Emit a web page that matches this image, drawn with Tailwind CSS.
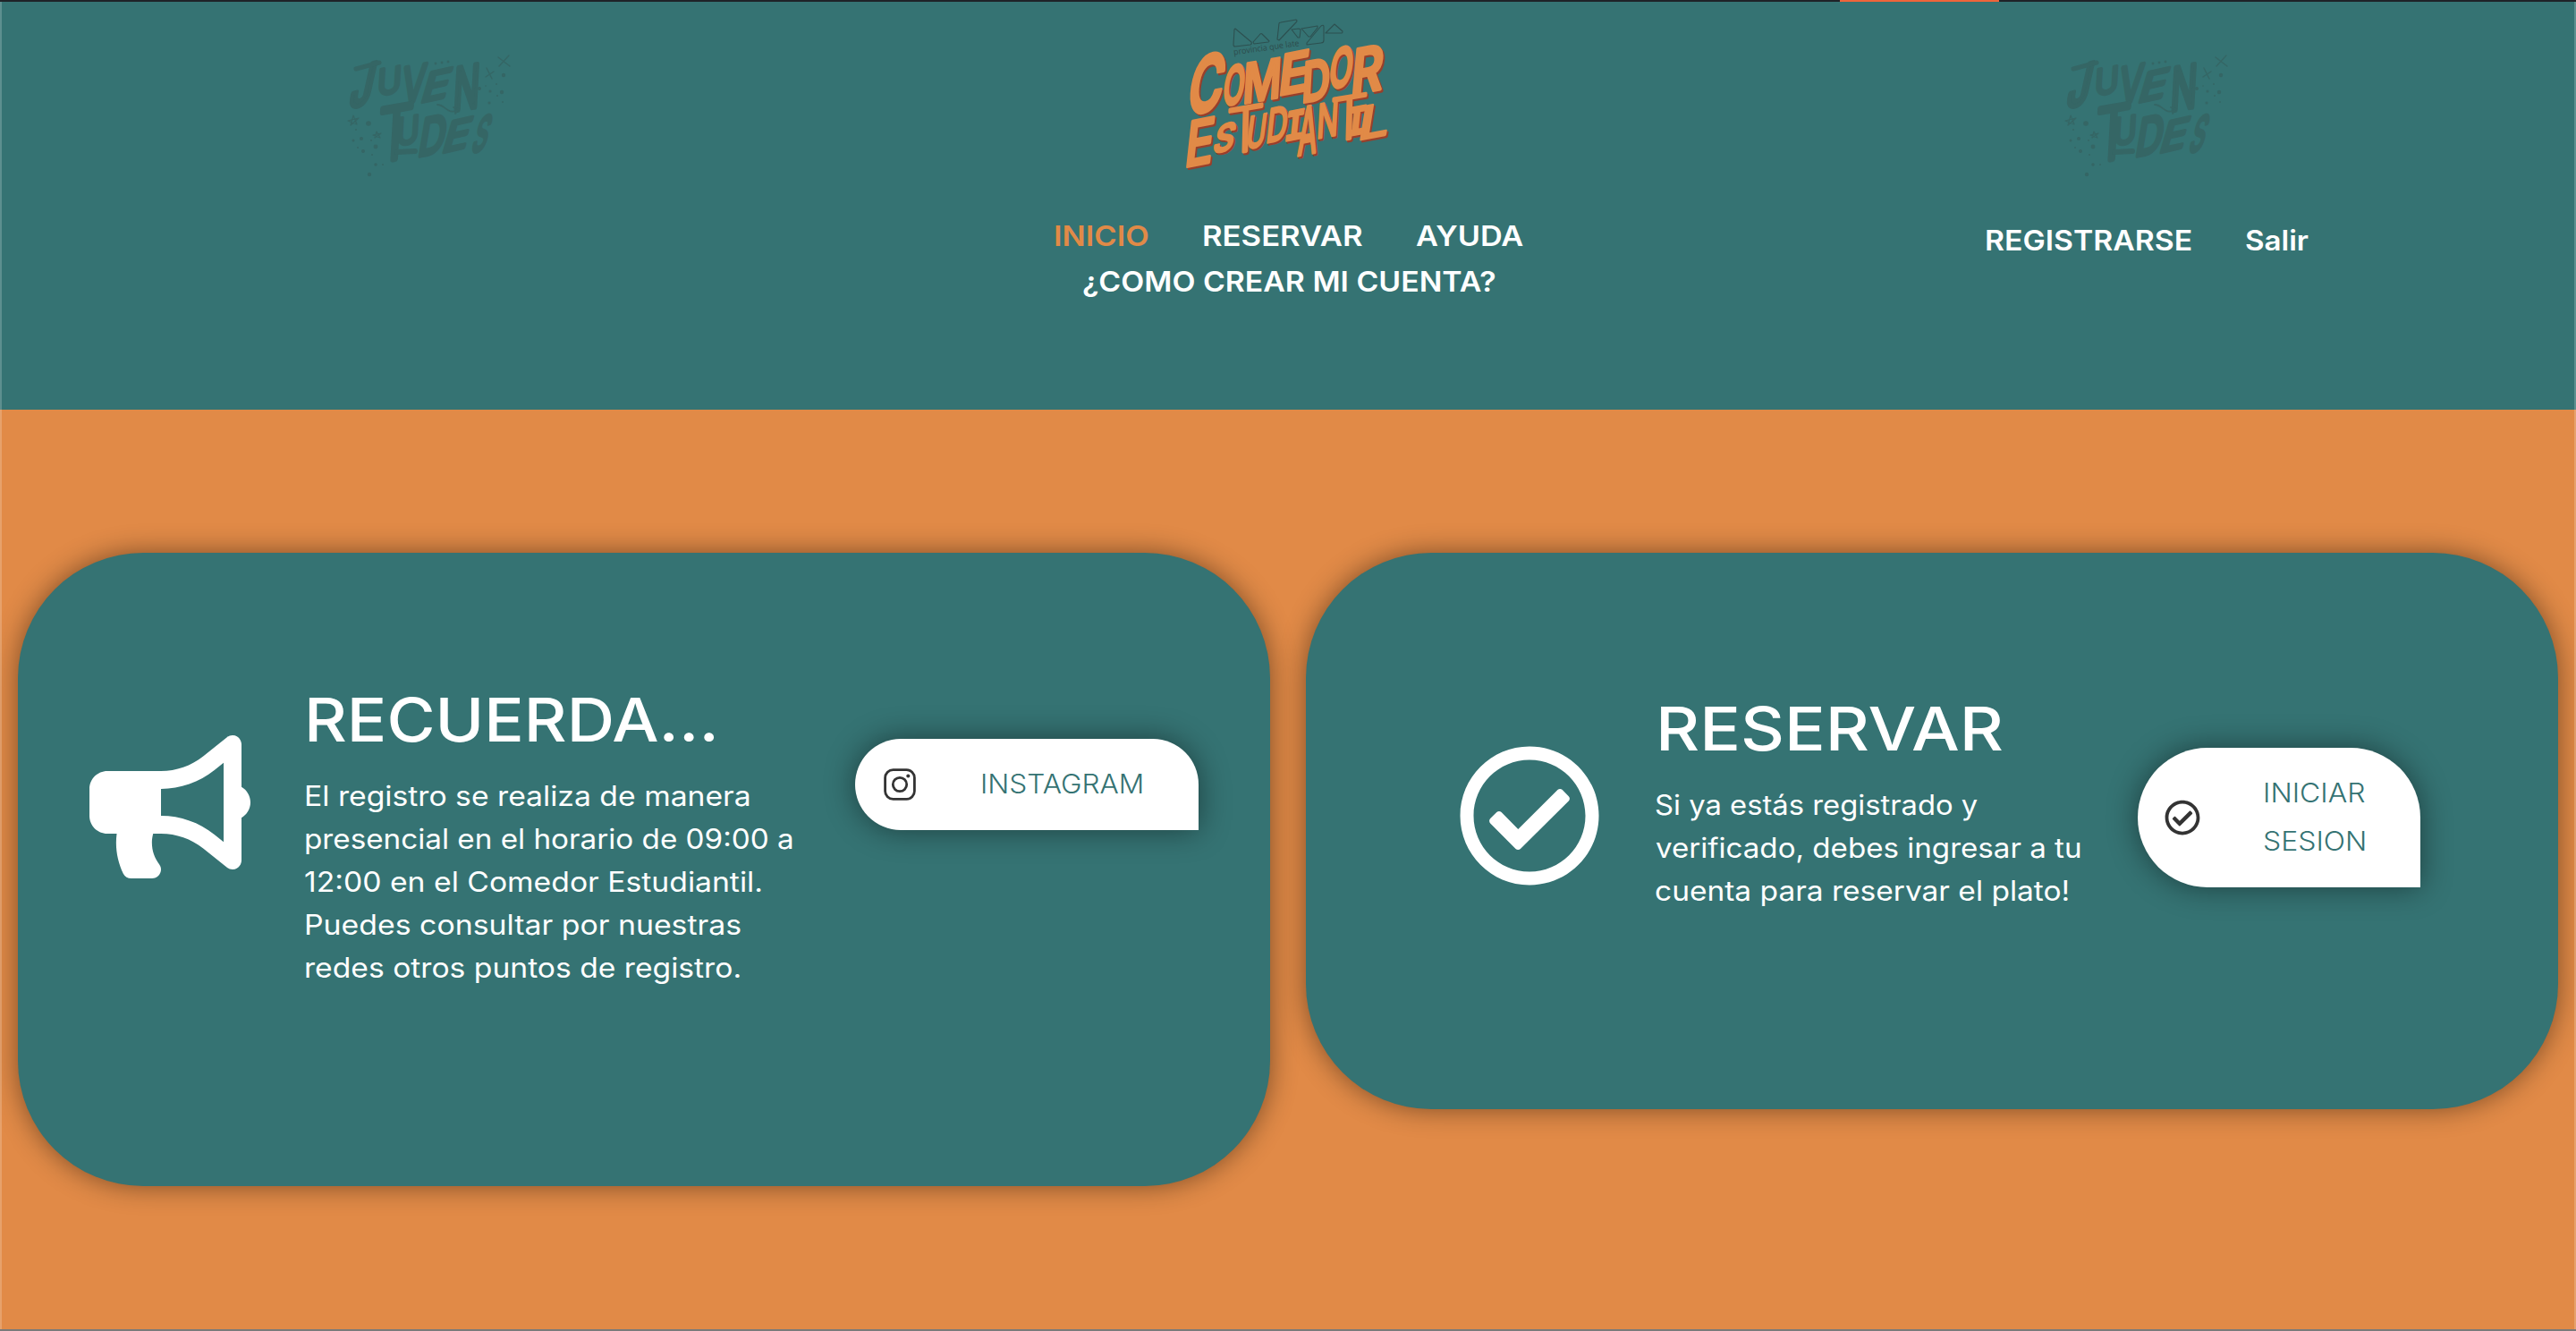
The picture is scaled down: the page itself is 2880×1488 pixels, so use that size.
<!DOCTYPE html>
<html lang="es">
<head>
<meta charset="utf-8">
<title>Comedor Estudiantil</title>
<script src="https://cdn.jsdelivr.net/npm/@tailwindcss/browser@4"></script>
</head>
<body class="relative flex h-[1488px] w-[2880px] flex-col overflow-hidden bg-[#e18a47] font-['Inter',sans-serif] text-white">
  <svg class="absolute size-0">
    <defs>
      <symbol id="check" viewBox="0 0 512 512"><path d="M256 8C119.033 8 8 119.033 8 256s111.033 248 248 248 248-111.033 248-248S392.967 8 256 8zm0 48c110.532 0 200 89.451 200 200 0 110.532-89.451 200-200 200-110.532 0-200-89.451-200-200 0-110.532 89.451-200 200-200m140.204 130.267l-22.536-22.718c-4.667-4.705-12.265-4.736-16.97-.068L215.346 303.697l-59.792-60.277c-4.667-4.705-12.265-4.736-16.97-.069l-22.719 22.536c-4.705 4.667-4.736 12.265-.068 16.971l90.781 91.516c4.667 4.705 12.265 4.736 16.97.068l172.589-171.204c4.704-4.668 4.734-12.266.067-16.971z"/></symbol>
      <g id="juventudes" fill="#356665" stroke="#356665" stroke-linecap="round" stroke-linejoin="round">
        <g data-word="juventudes" stroke-width="9"></g>
        <g fill="none" stroke-width="5"><path d="M74 120l20-1" stroke-width="6"/><path d="M28 27l26-7"/></g>
        <g fill="none" stroke-width="1.8">
          <path d="M119 67c9 0 11 12 23 6m-5-3l6 2-4 5"/>
          <path d="M187 14l13 10m-1-12l-11 12M174 26l6 12m2-8l-9 6" stroke-width="1.4"/>
          <path d="M19 85l12-3-9 8 3-11 4 10zM47 101l9-2-7 5 2-7 4 7z" stroke-width="1.2"/>
        </g>
        <g stroke="none">
          <circle cx="117" cy="21" r="1.4"/><circle cx="124" cy="20" r="1.4"/><circle cx="131" cy="19" r="1.4"/>
          <circle cx="193" cy="34" r="2.2"/><circle cx="166" cy="49" r="2"/><circle cx="178" cy="52" r="1.6"/><circle cx="191" cy="53" r="2.2"/><circle cx="177" cy="65" r="1.6"/><circle cx="185" cy="44" r="1"/><circle cx="186" cy="57" r="1"/><circle cx="192" cy="64" r="1"/><circle cx="173" cy="46" r=".8"/>
          <circle cx="42" cy="88" r="2.8"/><circle cx="34" cy="105" r="2"/><circle cx="25" cy="107" r="1.5"/><circle cx="50" cy="114" r="2.4"/><circle cx="36" cy="119" r="2"/><circle cx="45" cy="107" r="1"/><circle cx="30" cy="115" r="1"/><circle cx="28" cy="95" r="1"/><circle cx="50" cy="134" r="1.8"/><circle cx="43" cy="145" r="2.2"/><circle cx="58" cy="134" r="1"/><circle cx="46" cy="123" r="1"/>
        </g>
      </g>
    </defs>
  </svg>

  <div class="flex h-0.5 w-full bg-[#1f2328]"><div class="ml-[2057px] w-[178px] bg-[#f0643a]"></div></div>

  <header class="grid h-[456px] grid-cols-3 bg-[#357373] text-[31px] font-[570]">
    <div class="flex justify-center pt-12">
      <svg class="h-[150px] w-[220px]" viewBox="0 0 220 150"><use href="#juventudes"/></svg>
    </div>
    <div class="flex flex-col items-center">
      <svg class="h-52 w-[280px]" viewBox="0 2 280 208">
        <g fill="none" stroke="#2d5050" stroke-width="1.1" stroke-linejoin="round">
          <path d="M81 32l18 15q1 2-1 3l-17 2q-2 0-2-2l1-17zM101 47l8-9q1-1 2 0l8 8-1 1-16 2zM130 26q0-1 2-1l17-3q2 1 0 3l-19 20-2-1zM144 33l8-1q2 0 2 2l-1 8-2 0zM155 32l18-3v2l-8 10-2 0zM161 48l16-19q3-2 3 1v15q0 3-3 3l-16 2zM182 37l10-10 9 8q0 2-1 2z"/>
        </g>
        <text class="font-['Open_Sans',sans-serif]" transform="translate(79.500 61.500) rotate(-8)" textLength="74" lengthAdjust="spacingAndGlyphs" font-size="9.500" font-weight="500" fill="#2d4d4d">provincia que late</text>
        <g data-word="comedor" transform="translate(1.700 2)" fill="#983f2b" stroke="#983f2b" stroke-width="5" stroke-linejoin="round"></g>
        <g data-word="comedor" fill="#e18a47" stroke="#e18a47" stroke-width="5" stroke-linejoin="round"></g>
      </svg>
      <nav class="mt-7 flex flex-col items-start leading-[51px] whitespace-nowrap">
        <div class="flex">
          <a class="w-[166.5px] origin-left scale-x-[1.112] text-[#e18a47]">INICIO</a>
          <a class="w-[238.5px] origin-left scale-x-[1.118]">RESERVAR</a>
          <a class="w-[120px] origin-left scale-x-[1.105]">AYUDA</a>
        </div>
        <a class="ml-8 origin-left scale-x-[1.09]">¿COMO CREAR MI CUENTA?</a>
      </nav>
    </div>
    <div class="flex flex-col items-center pt-12">
      <svg class="h-[150px] w-[220px]" viewBox="0 0 220 150"><use href="#juventudes"/></svg>
      <nav class="mt-[45px] flex leading-[48px]">
        <a class="w-[291px] origin-left scale-x-[1.088]">REGISTRARSE</a>
        <a class="w-[71px] origin-left scale-x-[1.068]">Salir</a>
      </nav>
    </div>
  </header>

  <main class="grid grid-cols-2 items-start gap-10 px-5 pt-40">
    <section class="flex h-[708px] items-start rounded-[140px] bg-[#357373] pl-20 shadow-[0_0_30px_rgba(0,0,0,0.45)]">
      <svg class="mt-[204px] h-40 w-[180px] shrink-0" viewBox="0 0 576 512" fill="currentColor"><path d="M576 240c0-23.63-12.95-44.04-32-55.12V32.01C544 23.26 537.02 0 512 0c-7.12 0-14.19 2.38-19.98 7.02l-85.03 68.03C364.28 109.19 310.66 128 256 128H64c-35.35 0-64 28.65-64 64v96c0 35.35 28.65 64 64 64h33.7c-1.39 10.48-2.18 21.14-2.18 32 0 39.77 9.26 77.35 25.56 110.94 5.19 10.69 16.52 17.06 28.4 17.06h74.28c26.05 0 41.69-29.84 25.9-50.56-16.4-21.52-26.15-48.36-26.15-77.44 0-11.11 1.62-21.79 4.41-32H256c54.66 0 108.28 18.81 150.98 52.95l85.03 68.03a32.023 32.023 0 0 0 19.98 7.02c24.92 0 32-22.78 32-32V295.13C563.05 284.04 576 263.63 576 240zm-96 141.42l-33.05-26.44C392.95 311.78 325.12 288 256 288v-96c69.12 0 136.95-23.78 190.95-66.98L480 98.58v282.84z"/></svg>
      <div class="mt-[145px] ml-[60px] w-[556px] shrink-0 whitespace-nowrap">
        <h2 class="origin-left scale-x-[1.096] text-[67.4px] leading-[84px] font-[450]">RECUERDA...</h2>
        <p class="mt-[19px] flex flex-col items-start text-[31px] leading-[48px]">
          <span class="origin-left scale-x-[1.087]">El registro se realiza de manera</span>
          <span class="origin-left scale-x-[1.072]">presencial en el horario de 09:00 a</span>
          <span class="origin-left scale-x-[1.087]">12:00 en el Comedor Estudiantil.</span>
          <span class="origin-left scale-x-[1.091]">Puedes consultar por nuestras</span>
          <span class="origin-left scale-x-[1.085]">redes otros puntos de registro.</span>
        </p>
      </div>
      <a class="mt-52 ml-[60px] flex h-[102px] w-96 items-center rounded-[51px] rounded-br-none bg-white pl-8 text-[#357373] shadow-[0_0_34px_rgba(0,0,0,0.45)]">
        <svg class="size-9" viewBox="0 0 36 36" fill="none" stroke="#333" stroke-width="2.800"><rect x="1.600" y="1.600" width="32.800" height="32.800" rx="9"/><circle cx="18" cy="18" r="7.700"/><circle cx="27.300" cy="8.500" r="2" fill="#333" stroke="none"/></svg>
        <span class="ml-[72px] origin-left scale-x-[1.083] text-[29.2px] font-[360]">INSTAGRAM</span>
      </a>
    </section>

    <section class="flex h-[622px] items-start rounded-[140px] bg-[#357373] pl-[170px] shadow-[0_0_30px_rgba(0,0,0,0.45)]">
      <svg class="mt-[214px] size-40 shrink-0" fill="currentColor"><use href="#check"/></svg>
      <div class="mt-[155px] ml-[60px] w-[480px] shrink-0 whitespace-nowrap">
        <h2 class="ml-px origin-left scale-x-[1.126] text-[67.4px] leading-[84px] font-[450]">RESERVAR</h2>
        <p class="mt-[19px] flex flex-col items-start text-[31px] leading-[48px]">
          <span class="origin-left scale-x-[1.057]">Si ya estás registrado y</span>
          <span class="ml-px origin-left scale-x-[1.068]">verificado, debes ingresar a tu</span>
          <span class="origin-left scale-x-[1.08]">cuenta para reservar el plato!</span>
        </p>
      </div>
      <a class="mt-[218px] ml-[60px] flex h-[156px] w-[316px] items-center rounded-[78px] rounded-br-none bg-white pl-[30px] text-[#357373] shadow-[0_0_34px_rgba(0,0,0,0.45)]">
        <svg class="size-10" fill="#333"><use href="#check"/></svg>
        <span class="ml-[70px] flex origin-left scale-x-[1.095] flex-col text-[29.2px] leading-[54px] font-[360]"><span>INICIAR</span><span>SESION</span></span>
      </a>
    </section>
  </main>

  <div class="absolute inset-x-0 top-0.5 bottom-0 border-x-2 border-white/20"></div>
  <div class="absolute inset-x-0 bottom-0 h-0.5 bg-[#7a7a7a]"></div>

  <script>
    // Hand-lettered wordmarks: [letter, left, top, right, bottom, slant, weight]
    const words = {
      comedor: [
        ['C',28,58,72,129,.14,600],['O',67,71,93,119,.1,600],['M',91,65,131,116,.05,600],['E',131,56,164,107,.1,600],['D',157,65,187,115,.05,600],['O',186,51,214,100,.1,600],['R',212,50,247,106,.08,600],
        ['E',26,131,59,187,.1,500],['S',56,136,83,172,.2],['T',72,116,115,173,.02,250],['U',93,127,117,167,.12,450],['D',116,118,141,160,.1,500],['I',138,119,158,158,.1],['A',151,117,175,174,.05,500],['N',173,113,196,155,.05,500],['T',188,104,231,159,.02,250],['I',206,115,227,153,.1],['L',220,114,255,157,.14,500]],
      juventudes: [
        ['J',21,20,52,71,.2,450],['U',53,24,78,57,.05,400],['V',79,21,110,66,.1,400],['E',101,26,137,65,.25,400],['N',138,22,166,74,.05,400],
        ['T',53,66,94,131,.05,200],['U',74,79,98,113,.05,400],['D',98,78,131,125,.15,400],['E',125,81,160,121,.25,400],['S',157,78,182,121,.25,400]]
    };
    const advance = {C:74,O:77,M:91,E:62,D:73,R:66,S:65,T:66,U:74,I:60,A:76,N:76,L:58,J:58,V:76};
    const bearing = {A:3,T:3,V:3,I:8};
    document.querySelectorAll('[data-word]').forEach(g => {
      for (const [ch, x0, y0, x1, y1, k, weight = 600] of words[g.dataset.word]) {
        const w = x1 - x0, h = y1 - y0, s = k * h, tilt = .16 * w;
        const side = bearing[ch] || 5, ink = advance[ch] - 2 * side;
        const a = (w - s) / ink;
        const t = document.createElementNS('http://www.w3.org/2000/svg', 'text');
        t.setAttribute('transform', `matrix(${a} ${-tilt / ink} ${-s / 72.7} ${(h - tilt) / 72.7} ${x0 - a * side} ${y1})`);
        t.setAttribute('font-size', 100);
        t.setAttribute('font-weight', weight);
        if (ch === 'I') t.setAttribute('font-family', 'Liberation Mono, monospace');
        t.textContent = ch;
        g.appendChild(t);
      }
    });
  </script>
</body>
</html>
